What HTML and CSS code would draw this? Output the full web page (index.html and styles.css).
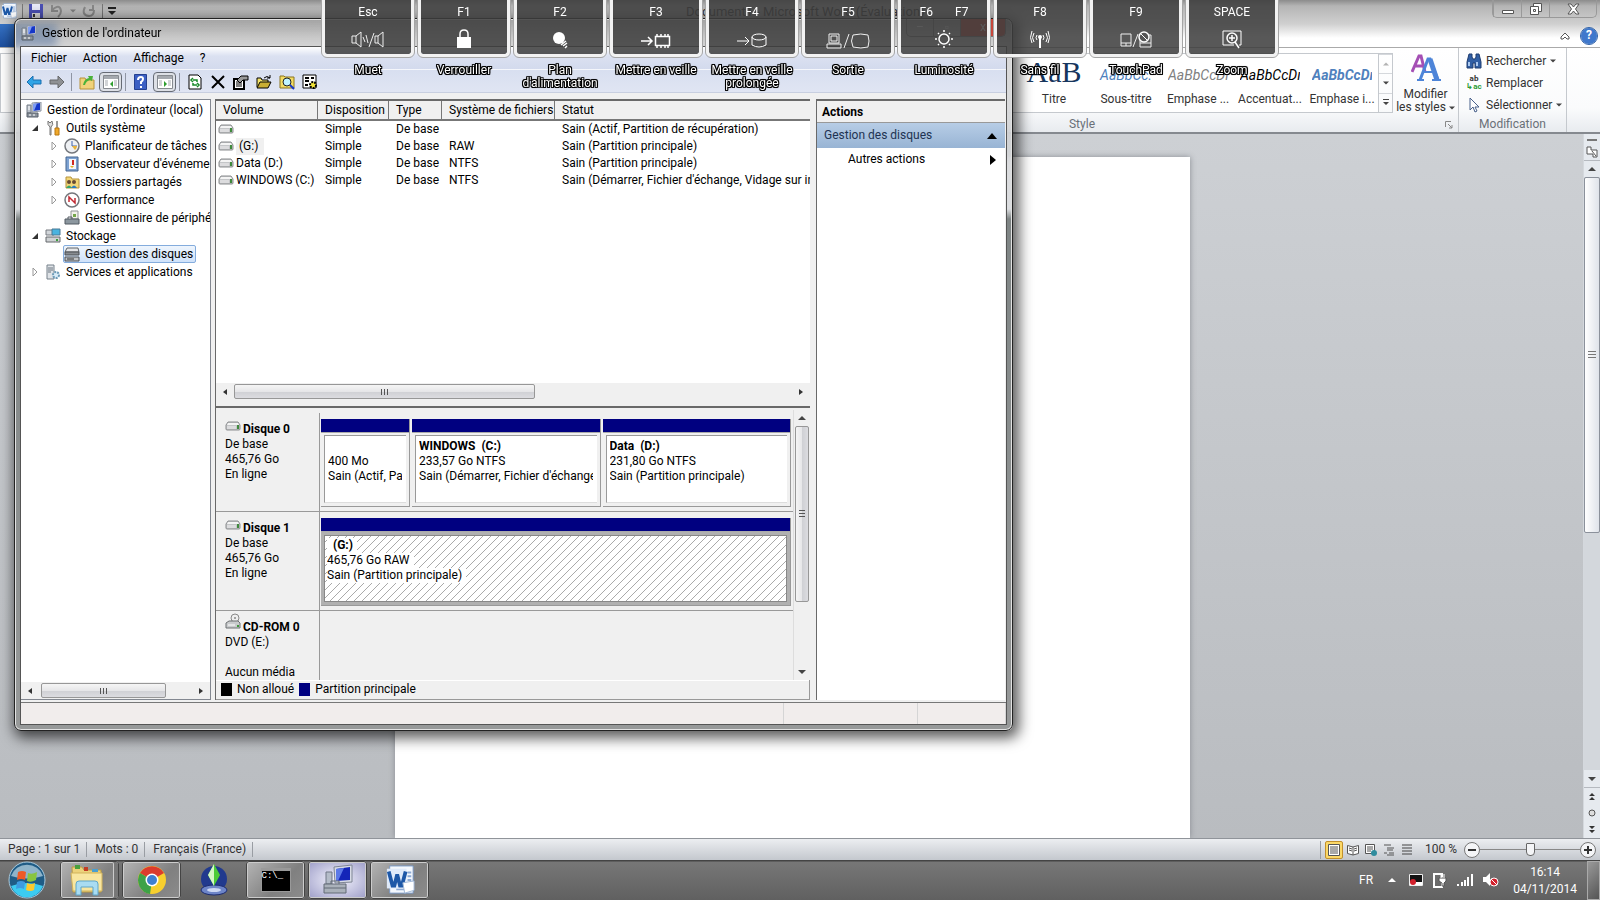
FILE: index.html
```html
<!DOCTYPE html>
<html lang="fr">
  <head>
    <meta charset="utf-8">
    <title>Gestion de l'ordinateur</title>
    <link rel="stylesheet" href="styles.css">
  </head>
  <body>
    <svg class="sprite" width="0" height="0" aria-hidden="true">
      <symbol id="disk" viewBox="0 0 16 10">
        <path d="M3 1h10l2 3v4q0 1-1 1H2Q1 9 1 8V4z" fill="#c4c6c8" stroke="#8b8d8f"/>
        <path d="M3 2h10l1 2H2z" fill="#f4f4f4"/>
        <path d="M2 5h9v3H2z" fill="#dcdcde"/>
        <path d="M12 4h2v4h-2z" fill="#3f8a3c"/>
      </symbol>
      <symbol id="pc" viewBox="0 0 16 16">
        <path d="M6 1l9-1v9l-9 1z" fill="#d9dde4" stroke="#8b93a0"/>
        <path d="M7 2l7-1v7l-7 1z" fill="#1637c8"/>
        <path d="M7 2l4-.6L8 9H7z" fill="#7f9df2"/>
        <path d="M1 3h4v8H1z" fill="#b9c0c9" stroke="#747c86"/>
        <path d="M2 5h2M2 7h2" stroke="#fff"/>
        <path d="M1 11h11v4H1z" fill="#8a929b" stroke="#59616a"/>
        <path d="M3 13h2m2 0h2" stroke="#fff"/>
      </symbol>
      <symbol id="open" viewBox="0 0 8 8"><path d="M7 1v6H1z" fill="#333"/></symbol>
      <symbol id="closed" viewBox="0 0 8 8"><path d="M2 0l4 4-4 4z" fill="#fff" stroke="#999"/></symbol>
      <symbol id="left" viewBox="0 0 8 8"><path d="M6 1v6L2 4z" fill="#333"/></symbol>
      <symbol id="right" viewBox="0 0 8 8"><path d="M2 1v6l4-3z" fill="#333"/></symbol>
      <symbol id="up" viewBox="0 0 8 8"><path d="M0 6h8L4 2z" fill="#444"/></symbol>
      <symbol id="down" viewBox="0 0 8 8"><path d="M0 2h8L4 6z" fill="#444"/></symbol>
      <symbol id="pane" viewBox="0 0 16 14">
        <path d="M.5.5h15v13H.5z" fill="#fff" stroke="#868a90"/>
        <path d="M1 1h14v3H1z" fill="#a5a9af"/>
        <path d="M2 6h3M2 8h3M2 10h3M11 6h3M11 8h3M11 10h3" stroke="#a5a9af"/>
      </symbol>
      <symbol id="word" viewBox="0 0 32 32">
        <path d="M5 1h25v29H5z" fill="#f4f8fd" stroke="#7696c4"/>
        <path d="M24 8h4M24 12h4M24 16h4M12 26h12" stroke="#8ba9d5" stroke-width="2"/>
        <path d="M2 4h21v21H2z" fill="#dfeafa"/>
        <path d="M4 7l4 15h2l3-12 3 12h2l4-15" fill="none" stroke="#1d58a8" stroke-width="4"/>
        <path d="M19 19l12-2v10l-10 3z" fill="#fff" stroke="#9db4d4"/>
      </symbol>
    </svg>

    <main class="desktop">
      <section class="word">
        <header class="word-title">
          <div class="quick">
            <svg width="16" height="16"><use href="#word"/></svg>
            <i class="bar"></i>
            <button aria-label="Enregistrer"><svg width="16" height="16" viewBox="0 0 16 16"><path d="M1 1h14v14H1z" fill="#4b50b4"/><path d="M4 1h8v6H4z" fill="#e8eaf8"/><path d="M4 10h8v5H4z" fill="#ddd"/><path d="M5 11h2v3H5z" fill="#333"/></svg></button>
            <button aria-label="Annuler"><svg width="16" height="16" viewBox="0 0 16 16"><path d="M3 2v6h6M3 7q8-7 9 1 0 3-3 6" fill="none" stroke="#888" stroke-width="2"/></svg></button>
            <svg width="6" height="6"><use href="#down" opacity=".5"/></svg>
            <button aria-label="Rétablir"><svg width="16" height="16" viewBox="0 0 16 16"><path d="M12 2v5H8M4 4q-4 8 4 9 5 0 5-6" fill="none" stroke="#888" stroke-width="2"/></svg></button>
            <i class="bar"></i>
            <svg width="8" height="9" viewBox="0 0 8 9"><path d="M0 0h8v2H0zM0 4h8L4 8z" fill="#222"/></svg>
          </div>
          <span class="word-name">Document1 - Microsoft Word (Évaluation)</span>
          <div class="word-buttons">
            <button aria-label="Réduire"><svg width="12" height="12" viewBox="0 0 12 12"><path d="M.5 7.500h11v3H.5z" fill="#fff" stroke="#555"/></svg></button>
            <button aria-label="Niveau inférieur"><svg width="12" height="12" viewBox="0 0 12 12"><path d="M3.500.5h8v8h-8z" fill="#fff" stroke="#555"/><path d="M.5 3.500h8v8h-8zM3.500 6.500h2v2h-2z" fill="#fff" stroke="#555"/></svg></button>
            <button class="wide" aria-label="Fermer"><svg width="13" height="12" viewBox="0 0 13 12"><path d="M1 1h3l2.500 3L9 1h3L8.500 6l3.500 5H9L6.500 8 4 11H1l3.500-5z" fill="#fff" stroke="#555"/></svg></button>
          </div>
        </header>
        <nav class="tabs">
          <button class="file-tab" aria-label="Fichier"></button>
          <div class="tab-right">
            <button aria-label="Réduire le ruban"><svg width="10" height="8" viewBox="0 0 10 8"><path d="M1 5l4-4 4 4v2H7L5 5 3 7H1z" fill="#fff" stroke="#555"/></svg></button>
            <button class="help" aria-label="Aide">?</button>
          </div>
        </nav>
        <div class="ribbon">
          <div class="group style-group">
            <div class="group-body">
              <div class="gallery">
                <button class="style-item"><span class="sample titre">AaB</span>Titre</button>
                <button class="style-item"><span class="sample sous">AaBbCc.</span>Sous-titre</button>
                <button class="style-item"><span class="sample emph">AaBbCcDı</span>Emphase ...</button>
                <button class="style-item"><span class="sample acc">AaBbCcDı</span>Accentuat...</button>
                <button class="style-item"><span class="sample intense">AaBbCcDı</span>Emphase i...</button>
              </div>
              <div class="gallery-scroll">
                <button aria-label="Haut"><svg width="6" height="6" opacity=".4"><use href="#up"/></svg></button>
                <button aria-label="Bas"><svg width="6" height="6"><use href="#down"/></svg></button>
                <button aria-label="Autres"><svg width="6" height="8" viewBox="0 0 6 8"><path d="M0 0h6v1H0zM0 3h6L3 6z" fill="#444"/></svg></button>
              </div>
              <button class="modify">
                <svg width="30" height="28" viewBox="0 0 30 28"><path d="M1 18L8 2h2l4 16M4 12h9" fill="none" stroke="#a44fb4" stroke-width="3"/><path d="M9 26l8-21 2 0 8 21" fill="none" stroke="#4d84d8" stroke-width="3"/><path d="M19 5l7 21" stroke="#4d84d8" stroke-width="5"/><path d="M12 18h12M6 26h7m8 0h9" stroke="#4d84d8" stroke-width="2"/></svg>
                <span>Modifier</span>
                <span>les styles <svg width="6" height="6"><use href="#down"/></svg></span>
              </button>
            </div>
            <div class="group-name">Style<svg class="launcher" width="8" height="8" viewBox="0 0 8 8"><path d="M.5 6V.5H6M3 3l4 4M7 4v3H4" fill="none" stroke="#888"/></svg></div>
          </div>
          <div class="group edit-group">
            <div class="group-body edit">
              <button><svg width="16" height="16" viewBox="0 0 16 16"><path d="M3 1h3v3l1 2h2l1-2V1h3l2 8v6H9v-5H7v5H1V9z" fill="#315fa4" stroke="#1f3c6f"/><path d="M3 9v4m8-4v4" stroke="#a9c8f0" stroke-width="2"/></svg>Rechercher <svg width="6" height="6"><use href="#down"/></svg></button>
              <button><span class="abac"><b>ab</b><b class="ac">↳ac</b></span>Remplacer</button>
              <button><svg width="16" height="16" viewBox="0 0 16 16"><path d="M4 1v12l3-3 2 5 2-1-2-4h4z" fill="#fff" stroke="#48608a"/></svg>Sélectionner <svg width="6" height="6"><use href="#down"/></svg></button>
            </div>
            <div class="group-name">Modification</div>
          </div>
        </div>
        <div class="doc">
          <div class="doc-view"><article class="page"></article></div>
          <div class="doc-scroll">
            <i class="split"></i>
            <button aria-label="Règle"><svg width="12" height="12" viewBox="0 0 12 12"><path d="M1 1h4v3h6v7H7V8H1z" fill="#fff" stroke="#555"/><path d="M6 5l4 5" stroke="#555"/></svg></button>
            <button class="line-top" aria-label="Défiler vers le haut"><svg width="10" height="8"><use href="#up"/></svg></button>
            <div class="track"><div class="thumb"><i class="grip"></i></div></div>
            <button aria-label="Défiler vers le bas"><svg width="10" height="8"><use href="#down"/></svg></button>
            <button class="line-top" aria-label="Page précédente"><svg width="8" height="8" viewBox="0 0 8 8"><path d="M1 4h6L4 1zM1 8h6L4 5z" fill="#333"/></svg></button>
            <button aria-label="Parcourir"><svg width="8" height="8" viewBox="0 0 8 8"><circle cx="4" cy="4" r="3" fill="#ddd" stroke="#555"/></svg></button>
            <button aria-label="Page suivante"><svg width="8" height="8" viewBox="0 0 8 8"><path d="M1 0h6L4 3zM1 4h6L4 7z" fill="#333"/></svg></button>
          </div>
        </div>
        <footer class="word-status">
          <span class="stat">Page : 1 sur 1</span>
          <span class="stat">Mots : 0</span>
          <span class="stat">Français (France)</span>
          <div class="views">
            <button class="on" aria-label="Page"><svg width="12" height="12" viewBox="0 0 12 12"><path d="M.5.5h11v11H.5z" fill="#fff" stroke="#555"/><path d="M2 3h8M2 5h8M2 7h8M2 9h8" stroke="#555"/></svg></button>
            <button aria-label="Lecture plein écran"><svg width="12" height="12" viewBox="0 0 12 12"><path d="M.5 1.500L6 3l5.500-1.500v8L6 11 .5 9.500zM6 3v8M2 4l3 1M2 6l3 1M7 5l3-1M7 7l3-1" fill="#fff" stroke="#555"/></svg></button>
            <button aria-label="Web"><svg width="12" height="12" viewBox="0 0 12 12"><path d="M.5.5h9v9h-9zM2 3h6M2 5h6M2 7h4" fill="#fff" stroke="#555"/><circle cx="9" cy="9" r="3" fill="#2f8c9e"/></svg></button>
            <button aria-label="Plan"><svg width="12" height="12" viewBox="0 0 12 12"><path d="M1 1h7M4 4h7M4 6h6M1 9h3M6 9h5M4 11h7" stroke="#555"/></svg></button>
            <button aria-label="Brouillon"><svg width="12" height="12" viewBox="0 0 12 12"><path d="M1 1h10M1 4h10M1 7h10M1 10h10" stroke="#444"/></svg></button>
          </div>
          <label class="percent" for="zoom">100 %</label>
          <button class="round" aria-label="Zoom arrière"><svg width="8" height="8" viewBox="0 0 8 8"><path d="M0 4h8" stroke="#333" stroke-width="2"/></svg></button>
          <input class="zoom" id="zoom" type="range" min="0" max="100" value="50">
          <button class="round" aria-label="Zoom avant"><svg width="8" height="8" viewBox="0 0 8 8"><path d="M0 4h8M4 0v8" stroke="#333" stroke-width="2"/></svg></button>
        </footer>
      </section>

      <section class="window">
        <header class="titlebar">
          <svg width="16" height="16"><use href="#pc"/></svg>
          <h1>Gestion de l'ordinateur</h1>
          <div class="win-buttons">
            <button aria-label="Réduire">–</button>
            <button aria-label="Agrandir">▫</button>
            <button class="close" aria-label="Fermer">x</button>
          </div>
        </header>
        <div class="client">
          <nav class="menubar">
            <button>Fichier</button><button>Action</button><button>Affichage</button><button>?</button>
          </nav>
          <div class="toolbar">
            <button aria-label="Précédent"><svg width="16" height="14" viewBox="0 0 16 14"><path d="M1 7l6-6v4h8v4H7v4z" fill="#2fa4e6" stroke="#1a6fb0"/></svg></button>
            <button aria-label="Suivant"><svg width="16" height="14" viewBox="0 0 16 14"><path d="M15 7L9 1v4H1v4h8v4z" fill="#8f9194" stroke="#66686b"/></svg></button>
            <i class="sep"></i>
            <button aria-label="Dossier parent"><svg width="16" height="16" viewBox="0 0 16 16"><path d="M1 4h5l1 2h8v9H1z" fill="#f1d27a" stroke="#b8923a"/><path d="M4 11q1-6 6-7L9 2l5 0-1 5-2-1q-4 1-5 5z" fill="#4bb23a"/></svg></button>
            <button class="pressed" aria-label="Arborescence"><svg width="16" height="14"><use href="#pane"/><path d="M10 6v6L7 9z" fill="#2f9e2f"/></svg></button>
            <i class="sep"></i>
            <button aria-label="Aide"><svg width="13" height="16" viewBox="0 0 13 16"><path d="M.5.5h12v15H.5z" fill="#3b5fc4" stroke="#25408f"/><path d="M4 6q0-3 3-3 2 0 2 2t-2 3v2M7 12v2" fill="none" stroke="#fff" stroke-width="2"/></svg></button>
            <button class="pressed" aria-label="Volet Actions"><svg width="16" height="14"><use href="#pane"/><path d="M7 6v6l3-3z" fill="#2f9e2f"/></svg></button>
            <i class="sep"></i>
            <button aria-label="Actualiser"><svg width="14" height="16" viewBox="0 0 14 16"><path d="M1 1h9l3 3v11H1z" fill="#fff" stroke="#000"/><path d="M5 6h4v2M5 4L3 6l2 2M9 11H5V9M9 9l2 2-2 2" fill="none" stroke="#188a28" stroke-width="1.500"/></svg></button>
            <button aria-label="Supprimer"><svg width="14" height="14" viewBox="0 0 14 14"><path d="M1 1l12 12M13 1L1 13" stroke="#000" stroke-width="2"/></svg></button>
            <button aria-label="Propriétés"><svg width="16" height="16" viewBox="0 0 16 16"><path d="M1 5h10v10H1z" fill="#fff" stroke="#000" stroke-width="2"/><path d="M3 8h6M3 10h6M3 12h6" stroke="#000"/><path d="M4 6l4-4h7v4h-5l-3 3z" fill="#999" stroke="#000"/></svg></button>
            <button aria-label="Ouvrir"><svg width="16" height="14" viewBox="0 0 16 14"><path d="M1 12V3h4l1 2h6v2" fill="#f4e36a" stroke="#000"/><path d="M1 13l3-6h11l-3 6z" fill="#c9ae33" stroke="#000"/><path d="M8 3q3-3 6 0M14 0v3h-3" fill="none" stroke="#000"/></svg></button>
            <button aria-label="Rechercher"><svg width="16" height="16" viewBox="0 0 16 16"><path d="M1 2h4l1 1h9v11H1z" fill="#f4dc62" stroke="#8a7420"/><circle cx="8" cy="8" r="4" fill="#bff4ff" stroke="#222"/><path d="M11 11l4 4" stroke="#1637c8" stroke-width="2"/></svg></button>
            <button aria-label="Paramètres"><svg width="16" height="16" viewBox="0 0 16 16"><path d="M1 1h13v13H1z" fill="#fff" stroke="#000"/><path d="M3 4h4M3 7h4M3 11h3M9 4h3" stroke="#000" stroke-width="2"/><circle cx="11" cy="11" r="3" fill="#f2e437" stroke="#000" stroke-dasharray="2 1" stroke-width="2"/></svg></button>
          </div>

          <div class="panels">
            <aside class="tree-pane">
              <ul class="tree">
                <li class="root"><svg width="16" height="16"><use href="#pc"/></svg><span>Gestion de l'ordinateur (local)</span></li>
                <li class="l1"><svg class="twist" width="8" height="8"><use href="#open"/></svg><svg width="16" height="16" viewBox="0 0 16 16"><path d="M5 15V7Q2 5 3 1l2 2 2-2q2 4-1 6v8z" fill="#ddd" stroke="#777"/><path d="M11 1h2v7h-2z" fill="#999"/><path d="M10 8h4v7h-4z" fill="#f0a92b" stroke="#b87610"/></svg><span>Outils système</span></li>
                <li class="l2"><svg class="twist" width="8" height="8"><use href="#closed"/></svg><svg width="16" height="16" viewBox="0 0 16 16"><circle cx="8" cy="8" r="7" fill="#eef0f3" stroke="#74777c" stroke-width="1.500"/><path d="M8 3v5h5" fill="none" stroke="#3f62ac"/><path d="M8 8h5a5 5 0 0 1-2 4z" fill="#e8b23a"/></svg><span>Planificateur de tâches</span></li>
                <li class="l2"><svg class="twist" width="8" height="8"><use href="#closed"/></svg><svg width="16" height="16" viewBox="0 0 16 16"><path d="M2 1h12v14H2z" fill="#7da2d2" stroke="#44648f"/><path d="M5 3h7v10H5z" fill="#f4f6fa"/><path d="M9 4v5" stroke="#d02a20" stroke-width="2"/><path d="M6 10h4l-2 2z" fill="#e5b021"/></svg><span>Observateur d'événements</span></li>
                <li class="l2"><svg class="twist" width="8" height="8"><use href="#closed"/></svg><svg width="16" height="16" viewBox="0 0 16 16"><path d="M2 3h5l1 2h7v9H2z" fill="#f3d677" stroke="#b6933c"/><circle cx="5" cy="8" r="2" fill="#674a33"/><circle cx="10" cy="8" r="2" fill="#674a33"/><path d="M2 14q3-5 6 0z" fill="#37a66a"/><path d="M7 14q3-5 6 0z" fill="#2c7bc0"/></svg><span>Dossiers partagés</span></li>
                <li class="l2"><svg class="twist" width="8" height="8"><use href="#closed"/></svg><svg width="16" height="16" viewBox="0 0 16 16"><circle cx="8" cy="8" r="7" fill="#fff" stroke="#74777c" stroke-width="1.500"/><path d="M5 10V5l6 6V6" fill="none" stroke="#c22a33" stroke-width="1.500"/></svg><span>Performance</span></li>
                <li class="l2"><svg class="twist" width="8" height="8"></svg><svg width="16" height="16" viewBox="0 0 16 16"><path d="M7 1h7v8H7z" fill="#f2f2ea" stroke="#8f9294"/><path d="M9 4h3v3H9z" fill="#74a74a"/><path d="M1 9h14v5H1z" fill="#8c979f" stroke="#525b63"/><path d="M4 9V7h4v2" fill="none" stroke="#525b63"/></svg><span>Gestionnaire de périphériques</span></li>
                <li class="l1"><svg class="twist" width="8" height="8"><use href="#open"/></svg><svg width="16" height="16" viewBox="0 0 16 16"><path d="M1 2h8v5H1z" fill="#d2d6da" stroke="#767b80"/><path d="M7 1h8v6H7z" fill="#49b3df" stroke="#4a7893"/><path d="M1 9h14v5H1z" fill="#cfd2d4" stroke="#65696c"/><path d="M11 11h2v2h-2z" fill="#3c9d3c"/></svg><span>Stockage</span></li>
                <li class="l2 selected"><svg class="twist" width="8" height="8"></svg><span class="pick"><svg width="16" height="16" viewBox="0 0 16 16"><path d="M3 2h11l1 4H1z" fill="#e5e6e8" stroke="#606468"/><path d="M1 6h14v3H1z" fill="#888c90" stroke="#4d5154"/><path d="M1 11h14v4H1z" fill="#bfc2c4" stroke="#4d5154"/><path d="M3 13h7" stroke="#333"/></svg>Gestion des disques</span></li>
                <li class="l1"><svg class="twist" width="8" height="8"><use href="#closed"/></svg><svg width="16" height="16" viewBox="0 0 16 16"><path d="M2 1h7v14H2z" fill="#dfe3e7" stroke="#77818b"/><path d="M3 4h5M3 6h5M3 8h3" stroke="#6c7781"/><circle cx="11" cy="11" r="3" fill="#d9ecf8" stroke="#6d9bb8" stroke-width="2" stroke-dasharray="2 1"/></svg><span>Services et applications</span></li>
              </ul>
              <div class="hscroll">
                <button aria-label="Gauche"><svg width="8" height="8"><use href="#left"/></svg></button>
                <div class="htrack"><div class="hthumb tree-thumb"><i></i></div></div>
                <button aria-label="Droite"><svg width="8" height="8"><use href="#right"/></svg></button>
              </div>
            </aside>

            <section class="middle">
              <div class="list">
                <table>
                  <colgroup><col class="c1"><col class="c2"><col class="c3"><col class="c4"><col></colgroup>
                  <thead><tr><th>Volume</th><th>Disposition</th><th>Type</th><th>Système de fichiers</th><th>Statut</th></tr></thead>
                  <tbody>
                    <tr><td class="vol"><svg width="16" height="10"><use href="#disk"/></svg></td><td>Simple</td><td>De base</td><td></td><td>Sain (Actif, Partition de récupération)</td></tr>
                    <tr><td class="vol"><svg width="16" height="10"><use href="#disk"/></svg><span class="focus">(G:)</span></td><td>Simple</td><td>De base</td><td>RAW</td><td>Sain (Partition principale)</td></tr>
                    <tr><td class="vol"><svg width="16" height="10"><use href="#disk"/></svg><span>Data (D:)</span></td><td>Simple</td><td>De base</td><td>NTFS</td><td>Sain (Partition principale)</td></tr>
                    <tr><td class="vol"><svg width="16" height="10"><use href="#disk"/></svg><span>WINDOWS (C:)</span></td><td>Simple</td><td>De base</td><td>NTFS</td><td>Sain (Démarrer, Fichier d'échange, Vidage sur incident)</td></tr>
                  </tbody>
                </table>
              </div>
              <div class="hscroll">
                <button aria-label="Gauche"><svg width="8" height="8"><use href="#left"/></svg></button>
                <div class="htrack"><div class="hthumb list-thumb"><i></i></div></div>
                <button aria-label="Droite"><svg width="8" height="8"><use href="#right"/></svg></button>
              </div>
              <div class="splitter"></div>
              <div class="lower">
                <div class="disks">
                  <div class="disk">
                    <div class="disk-info"><strong><svg width="16" height="10"><use href="#disk"/></svg>Disque 0</strong><span>De base</span><span>465,76 Go</span><span>En ligne</span></div>
                    <div class="parts">
                      <div class="part small"><div class="cap"></div><div class="part-body"><strong>&nbsp;</strong><span>400 Mo</span><span>Sain (Actif, Partition</span></div></div>
                      <div class="part"><div class="cap"></div><div class="part-body"><strong>WINDOWS&nbsp; (C:)</strong><span>233,57 Go NTFS</span><span>Sain (Démarrer, Fichier d'échange</span></div></div>
                      <div class="part"><div class="cap"></div><div class="part-body"><strong>Data&nbsp; (D:)</strong><span>231,80 Go NTFS</span><span>Sain (Partition principale)</span></div></div>
                    </div>
                  </div>
                  <div class="disk">
                    <div class="disk-info"><strong><svg width="16" height="10"><use href="#disk"/></svg>Disque 1</strong><span>De base</span><span>465,76 Go</span><span>En ligne</span></div>
                    <div class="parts">
                      <div class="part hatched"><div class="cap"></div><div class="part-body"><strong>&nbsp; (G:)</strong><span>465,76 Go RAW</span><span>Sain (Partition principale)</span></div></div>
                    </div>
                  </div>
                  <div class="disk">
                    <div class="disk-info"><strong><svg width="16" height="16" viewBox="0 0 16 16"><circle cx="10" cy="5" r="4" fill="#eee" stroke="#888"/><circle cx="10" cy="5" r="1" fill="#888"/><path d="M1 10l3-2h9l2 2v5H1z" fill="#c9cbcd" stroke="#6d7072"/><path d="M3 12h7" stroke="#fff"/><path d="M12 12h2v2h-2z" fill="#3f9a3c"/></svg>CD-ROM 0</strong><span>DVD (E:)</span><span>&nbsp;</span><span>Aucun média</span></div>
                    <div class="parts"></div>
                  </div>
                </div>
                <div class="vscroll">
                  <button aria-label="Haut"><svg width="8" height="8"><use href="#up"/></svg></button>
                  <div class="vtrack"><div class="vthumb"><i></i></div></div>
                  <button aria-label="Bas"><svg width="8" height="8"><use href="#down"/></svg></button>
                </div>
              </div>
              <div class="legend"><i class="black"></i><span>Non alloué</span><i class="navy"></i><span>Partition principale</span></div>
            </section>

            <aside class="actions">
              <h2>Actions</h2>
              <button class="act-head">Gestion des disques<svg width="10" height="8"><path d="M0 7h10L5 1z"/></svg></button>
              <button class="act-item">Autres actions<svg width="6" height="10"><path d="M0 0v10l6-5z"/></svg></button>
            </aside>
          </div>
          <footer class="status"><span></span><span></span><span></span></footer>
        </div>
      </section>
    </main>

    <footer class="taskbar">
      <button class="start" aria-label="Démarrer"><svg width="38" height="38" viewBox="0 0 38 38"><circle cx="19" cy="19" r="18" fill="#1f5c86" stroke="#a9c9dc"/><path d="M3 25a17 17 0 0 0 32 0q-16-6-32 0z" fill="#3ccbf0"/><path d="M3 15a17 17 0 0 1 32 0q-16 5-32 0z" fill="#8fb4ca"/><path d="M10 11q4-2 8 0l-1 8q-4-2-8 0z" fill="#ee5a25"/><path d="M20 12q4 2 9-1l-1 8q-5 3-9 1z" fill="#88c540"/><path d="M9 21q4-2 8 0l-1 7q-4-2-8 0z" fill="#3d9be0"/><path d="M19 22q4 2 8 0l-1 7q-4 2-8 0z" fill="#fcc92d"/></svg></button>
      <button class="task stack" aria-label="Explorateur"><svg width="34" height="32" viewBox="0 0 34 32"><path d="M2 3h10l2 3h17v22H3z" fill="#ecd27b" stroke="#b99a45"/><path d="M5 1h5v4H5z" fill="#48a03e"/><path d="M14 3h4v4h-4z" fill="#c23c25"/><path d="M22 5h6v3h-6z" fill="#4a9fd0"/><path d="M1 9h31v18H3z" fill="#f8e6a0" stroke="#d1b35d"/><path d="M6 31V20q0-3 3-3h16q3 0 3 3v11h-5v-8H11v8z" fill="#a9dcf2" stroke="#5ea6c9"/></svg></button>
      <button class="task" aria-label="Chrome"><svg width="30" height="30" viewBox="0 0 30 30"><circle cx="15" cy="15" r="14" fill="#f7cf2e"/><path d="M15 15L3 8a14 14 0 0 1 24 0z" fill="#db3b2d"/><path d="M15 15L3 8a14 14 0 0 0 10 21z" fill="#3ea247"/><circle cx="15" cy="15" r="6.500" fill="#fff"/><circle cx="15" cy="15" r="5" fill="#3f7fd0"/></svg></button>
      <button class="task plain" aria-label="Les Sims"><svg width="28" height="32" viewBox="0 0 28 32"><circle cx="14" cy="15" r="13" fill="#213a8e"/><ellipse cx="14" cy="26" rx="13" ry="5" fill="#6d85c8" stroke="#1c2c72"/><ellipse cx="14" cy="26" rx="7" ry="2" fill="#cdd8f3"/><path d="M14 0l6 11-6 11-6-11z" fill="#4ccc38"/><path d="M14 0v22L8 11z" fill="#d5f7c6"/></svg></button>
      <button class="task" aria-label="Invite de commandes"><span class="cmd">C:\_</span></button>
      <button class="task active" aria-label="Gestion de l'ordinateur"><svg width="32" height="32" viewBox="0 0 32 32"><path d="M12 3l18-2v17l-17 1z" fill="#d8dce6" stroke="#7e8594"/><path d="M14 5l14-2v13l-14 1z" fill="#1425b8"/><path d="M14 5l8-1-6 13h-2z" fill="#5c79e8"/><path d="M4 8h6v12H4z" fill="#b4bcc8" stroke="#6f7785"/><path d="M2 20h22v9H2z" fill="#aab1ba" stroke="#626b76"/><path d="M9 20v-3h8v3M2 24h22" fill="none" stroke="#626b76"/></svg></button>
      <button class="task" aria-label="Word"><svg width="30" height="30"><use href="#word"/></svg></button>
      <div class="tray">
        <span>FR</span>
        <button aria-label="Icônes cachées"><svg width="8" height="8" viewBox="0 0 8 8"><path d="M0 6h8L4 2z" fill="#fff"/></svg></button>
        <svg width="14" height="12" viewBox="0 0 14 12"><path d="M.5.5h13v11H.5z" fill="#111" stroke="#eee"/><path d="M1 8h12v3H1z" fill="#fff"/><circle cx="4" cy="8" r="3" fill="#d2202c"/></svg>
        <svg width="14" height="16" viewBox="0 0 14 16"><path d="M1 2h8v13H1z" fill="none" stroke="#fff" stroke-width="2"/><path d="M6 6h7v3l-2 2v3H9v-3L6 9z" fill="#fff" stroke="#555"/><path d="M8 2v4m3-4v4" stroke="#fff"/></svg>
        <svg width="16" height="12" viewBox="0 0 16 12"><path d="M0 12V10h2v2zM4 12V8h2v4zM7 12V6h2v6zM10 12V3h2v9zM14 12V0h2v12z" fill="#fff"/></svg>
        <svg width="16" height="14" viewBox="0 0 16 14"><path d="M0 4h3l4-4v13L3 9H0z" fill="#fff"/><circle cx="11" cy="9" r="4" fill="#d2202c" stroke="#fff"/><path d="M8 6l6 6" stroke="#fff"/></svg>
        <time><span>16:14</span><span>04/11/2014</span></time>
      </div>
      <button class="peek" aria-label="Afficher le Bureau"></button>
    </footer>

    <div class="keys">
      <div class="key"><button><span>Esc</span><svg width="34" height="18" viewBox="0 0 34 18"><path d="M1 5h4l5-4v15l-5-4H1zM5 5v7M12 6l2 5M15 4l2 8M18 16l5-14M24 5h3l5-4v15l-5-4h-3zM27 5v7" fill="none" stroke="#eee"/></svg></button><p>Muet</p></div>
      <div class="key"><button><span>F1</span><svg width="16" height="20" viewBox="0 0 16 20"><path d="M4 9V5q0-4 4-4t4 4v4" fill="none" stroke="#fff" stroke-width="1.500"/><path d="M1 8h14v11H1z" fill="#fff"/></svg></button><p>Verrouiller</p></div>
      <div class="key"><button><span>F2</span><svg width="18" height="18" viewBox="0 0 18 18"><circle cx="8" cy="7" r="6" fill="#fff"/><path d="M10 14l5-4M12 15l4-3M14 17l2-2" stroke="#fff" stroke-width="1.500"/></svg></button><p>Plan d'alimentation</p></div>
      <div class="key"><button><span>F3</span><svg width="32" height="16" viewBox="0 0 32 16"><path d="M1 8h11M8 4l4 4-4 4M15.500 3.500h14v9h-14zM17 1v2m4-2v2m4-2v2m3-2v2M17 13v2m4-2v2m4-2v2m3-2v2" fill="none" stroke="#fff" stroke-width="1.500"/></svg></button><p>Mettre en veille</p></div>
      <div class="key"><button><span>F4</span><svg width="32" height="16" viewBox="0 0 32 16"><path d="M1 8h12M9 4l4 4-4 4M16 4v8q7 4 14 0V4" fill="none" stroke="#fff"/><ellipse cx="23" cy="4" rx="7" ry="3" fill="none" stroke="#fff"/></svg></button><p>Mettre en veille prolongée</p></div>
      <div class="key"><button><span>F5</span><svg width="44" height="16" viewBox="0 0 44 16"><path d="M3 1h10v9H3zM5 3h6v5H5zM1 11h14v4H1zM18 15l5-14M27 2q8-2 15 0 2 6 0 12-7 2-15 0-3-6 0-12" fill="none" stroke="#eee"/></svg></button><p>Sortie</p></div>
      <div class="key"><button><span class="pair"><span>F6</span><span>F7</span></span><svg width="20" height="20" viewBox="0 0 20 20"><circle cx="10" cy="10" r="5" fill="none" stroke="#fff" stroke-width="1.500"/><path d="M10 1v2m0 14v2M1 10h2m14 0h2M4 4l1 1m10 10l1 1M4 16l1-1M15 5l1-1" stroke="#fff" stroke-width="1.500"/></svg></button><p>Luminosité</p></div>
      <div class="key"><button><span>F8</span><svg width="20" height="20" viewBox="0 0 20 20"><path d="M10 9v10" stroke="#fff" stroke-width="2"/><path d="M7 6q-2 3 0 5M13 6q2 3 0 5M4 4q-3 5 0 9M16 4q3 5 0 9M2 2q-3 7 0 12M18 2q3 7 0 12" fill="none" stroke="#fff"/><circle cx="10" cy="8" r="2" fill="#fff"/></svg></button><p>Sans fil</p></div>
      <div class="key"><button><span>F9</span><svg width="34" height="18" viewBox="0 0 34 18"><path d="M2 3h10v12H2zM2 12h10M7 12v3M14 16l5-13M21 4h11v12H21zM21 12h11" fill="none" stroke="#eee"/><circle cx="25" cy="6" r="5" fill="#555" stroke="#fff" stroke-width="1.500"/><path d="M22 3l7 7" stroke="#fff"/></svg></button><p>TouchPad</p></div>
      <div class="key"><button><span>SPACE</span><svg width="20" height="20" viewBox="0 0 20 20"><path d="M12 16H1V2h18v14h-2" fill="none" stroke="#fff"/><circle cx="10" cy="9" r="5" fill="none" stroke="#fff" stroke-width="1.500"/><path d="M10 6v6M7 9h6M13 13l4 6" stroke="#fff" stroke-width="1.500"/></svg></button><p>Zoom</p></div>
    </div>
  </body>
</html>
```

FILE: styles.css
```css
* {box-sizing: border-box;}
body {margin: 0; height: 100vh; display: flex; flex-direction: column; overflow: hidden; font: 12px/15px Roboto, "Open Sans", sans-serif; color: #000;}
button {font: inherit; color: inherit; background: none; border: 0; padding: 0; margin: 0; display: flex; align-items: center; justify-content: center;}
svg {display: block; flex: none;}
p, h1, h2, ul {margin: 0; padding: 0; font: inherit;}
.sprite {position: absolute;}

.desktop {flex: 1; min-height: 0; display: flex; position: relative; overflow: hidden;}

/* word */
.word {flex: 1; display: flex; flex-direction: column; min-width: 0;}
.word-title {height: 24px; display: flex; justify-content: space-between; align-items: flex-start; background: linear-gradient(#8c8c8c, #b5b5b5 6px, #d0d0d0);}
.quick {display: flex; align-items: center; gap: 5px; height: 22px; width: 560px; padding-left: 1px;}
.bar {width: 1px; height: 14px; background: #777;}
.word-name {flex: 1; color: #333; padding: 4px 0 0 126px; font-size: 13px; white-space: nowrap;}
.word-buttons {display: flex; height: 18px; margin-right: 3px; border: 1px solid #999; border-top: 0; border-radius: 0 0 5px 5px;}
.word-buttons button {width: 28px; border-left: 1px solid #999;}
.word-buttons .wide {width: 47px;}
.tabs {height: 24px; display: flex; justify-content: space-between; background: linear-gradient(#d0d0d0, #fff 14px); border-bottom: 1px solid #aaa;}
.file-tab {width: 57px; background: linear-gradient(#3672c4, #1d4f9e);}
.tab-right {display: flex; align-items: center; gap: 11px; padding-right: 3px;}
.help {width: 16px; height: 16px; border-radius: 8px; background: #3f78cc; color: #fff; font-weight: bold; outline: 1px solid #2c5fa8;}
.ribbon {height: 86px; display: flex; justify-content: flex-end; padding-right: 33px; background: linear-gradient(#fff, #fafbfc 60px, #e8ebef); border-bottom: 2px solid #85898f; color: #333;}
.group {display: flex; flex-direction: column; border-right: 1px solid #c5c9ce;}
.style-group {flex: 1;}
.edit-group {width: 108px;}
.group-body {display: flex; height: 70px; padding-top: 5px; justify-content: flex-end;}
.group-name {display: flex; justify-content: center; color: #6a7078; position: relative;}
.style-group .group-name {padding-left: 706px;}
.launcher {position: absolute; right: 5px; top: 4px;}
.gallery {display: flex; height: 60px; border: 1px solid #c5c9ce; background: #fff; flex: 1; justify-content: flex-end;}
.style-item {flex-direction: column; justify-content: flex-start; width: 72px; height: 58px;}
.sample {height: 36px; width: 60px; overflow: hidden; line-height: 43px; margin-bottom: 2px; font-size: 14px; font-style: italic; white-space: nowrap;}
.titre {font: 30px/36px "Liberation Serif", serif; color: #17365d;}
.sous {color: #4f81bd;}
.emph {color: #808080;}
.acc {color: #000;}
.intense {color: #4f81bd; font-weight: bold;}
.gallery-scroll {width: 14px; height: 60px; display: flex; flex-direction: column; border: 1px solid #c5c9ce; border-left: 0;}
.gallery-scroll button {flex: 1; border-top: 1px solid #d5d8dc;}
.modify {flex-direction: column; justify-content: flex-start; width: 65px; line-height: 13px; padding-top: 1px;}
.modify span {display: flex; align-items: center; gap: 3px; white-space: nowrap;}
.modify > svg {margin-bottom: 6px;}
.edit {flex-direction: column; justify-content: flex-start; padding: 2px 0 0 7px;}
.edit button {height: 22px; gap: 4px; justify-content: flex-start; white-space: nowrap;}
.abac {width: 16px; display: flex; flex-direction: column; font-size: 8px; line-height: 8px;}
.ac {color: #2b9c35;}

.doc {flex: 1; min-height: 0; display: flex;}
.doc-view {flex: 1; display: flex; padding-left: 2px; background: linear-gradient(#cdd0d4, #b9bcc0);}
.page {width: 795px; margin: 23px auto 0; background: #fff; box-shadow: 0 0 6px #888c92;}
.doc-scroll {width: 17px; display: flex; flex-direction: column; background: #e6eaef; border-left: 1px solid #d4d8dd;}
.doc-scroll button {height: 17px;}
.doc-scroll .line-top {border-top: 1px solid #b5b9bf;}
.split {height: 2px; margin: 5px 3px 2px; background: #777;}
.track {flex: 1; background: #d3d7dc;}
.thumb {height: 60%; display: flex; align-items: center; justify-content: center; background: linear-gradient(90deg, #fff, #dfe3ea); border: 1px solid #8b919b; border-radius: 2px;}
.grip {width: 8px; height: 7px; background: repeating-linear-gradient(#777 0 1px, transparent 1px 3px);}
.word-status {height: 22px; display: flex; align-items: center; background: linear-gradient(#eceef1, #c4c8ce); border-top: 1px solid #90949a; color: #333;}
.stat {padding: 0 6px 0 8px; border-right: 1px solid #999da3; white-space: nowrap;}
.views {margin-left: auto; display: flex; border-left: 1px solid #999da3; padding-left: 4px;}
.views button {width: 18px; height: 18px;}
.views .on {background: #fbd868; border: 1px solid #c2902c; border-radius: 2px; margin-right: 1px;}
.percent {padding: 0 7px 0 9px; white-space: nowrap;}
.round {width: 16px; height: 16px; border: 1px solid #777; border-radius: 8px; background: #f4f5f7;}
.round:last-child {margin-right: 4px;}
.zoom {appearance: none; width: 100px; height: 16px; margin: 0; background: linear-gradient(#888, #888) center / 100% 1px no-repeat;}
.zoom::-webkit-slider-thumb {appearance: none; width: 9px; height: 13px; background: #f4f5f7; border: 1px solid #666; border-radius: 1px 1px 4px 4px;}

/* management console */
.window {position: absolute; left: 14px; top: 18px; width: 999px; height: 713px; display: flex; flex-direction: column; padding: 0 6px 6px; border: 1px solid #222; border-radius: 7px; background: linear-gradient(rgba(150, 150, 150, .75), rgba(200, 200, 200, .7) 29px, rgba(215, 217, 220, .9) 190px, #7e8484 200px, #979999); backdrop-filter: blur(4px); box-shadow: inset 0 0 0 1px #e2e2e2, 3px 4px 14px 3px rgba(0, 0, 0, .65);}
.titlebar {height: 28px; display: flex; align-items: center; gap: 5px;}
.titlebar svg {margin-top: -1px;}
.titlebar h1 {flex: 1; font-size: 12px;}
.win-buttons {display: flex; align-self: flex-start; color: #fff; border: 1px solid #777; border-top: 0; border-radius: 0 0 5px 5px; overflow: hidden;}
.win-buttons button {width: 27px; height: 17px; border-right: 1px solid #777;}
.win-buttons .close {width: 44px; border: 0; background: #c9473a;}
.client {flex: 1; min-height: 0; display: flex; flex-direction: column; background: #f0f0f0; outline: 1px solid #555;}
.menubar {height: 22px; display: flex; gap: 16px; padding: 1px 10px 0; background: linear-gradient(#fff, #dbe1f1 9px, #d3daed);}
.toolbar {height: 24px; display: flex; align-items: center; padding: 2px 0 0 1px; background: linear-gradient(#d8dff0, #e0e5f3); border-top: 1px solid #f4f6fb; border-bottom: 1px solid #c8cfe0;}
.toolbar button {width: 23px; height: 21px;}
.toolbar .pressed {height: 20px; border: 1px solid #666b75; border-radius: 4px; background: #dde0e6; margin-left: 1px;}
.sep {width: 1px; height: 18px; margin: 0 3px; background: #8f95a3;}
.panels {flex: 1; min-height: 0; display: flex; padding: 6px 1px 2px 0;}
.tree-pane {width: 190px; display: flex; flex-direction: column; margin-right: 4px; background: #fff; border: 1px solid #828790; border-left-width: 0;}
.tree {flex: 1; padding-top: 1px; list-style: none; overflow: hidden; white-space: nowrap;}
.tree li {height: 18px; display: flex; align-items: center; gap: 5px;}
.tree .twist {margin-right: 1px;}
.root {padding-left: 5px;}
.l1 {padding-left: 10px;}
.l2 {padding-left: 29px;}
.pick {height: 18px; display: flex; align-items: center; gap: 5px; margin-left: -1px; padding-right: 2px; border: 1px solid #84acdd; border-radius: 2px; background: linear-gradient(#eef5fd, #cfe2fa);}
.hscroll {height: 17px; display: flex; background: #f0f0f0;}
.hscroll button {width: 18px; flex: none;}
.htrack {flex: 1; padding: 1px 0;}
.hthumb {height: 15px; display: flex; align-items: center; justify-content: center; border: 1px solid #979797; border-radius: 2px; background: linear-gradient(#f5f5f5, #e6e6e8 50%, #cfd0d4 51%, #dcdce0);}
.hthumb i {width: 8px; height: 6px; background: repeating-linear-gradient(90deg, #555 0 1px, transparent 1px 3px);}
.tree-thumb {width: 82%; margin-left: 2px;}
.list-thumb {width: 54%;}

.middle {flex: 1; min-width: 0; display: flex; flex-direction: column; border-top: 2px solid #696969; border-left: 1px solid #696969; margin-right: 6px;}
.list {height: 282px; overflow: hidden; background: #fff;}
table {width: 100%; table-layout: fixed; border-collapse: separate; border-spacing: 0;}
.c1 {width: 102px;}
.c2 {width: 71px;}
.c3 {width: 53px;}
.c4 {width: 113px;}
th, td {padding: 0 0 0 7px; text-align: left; font-weight: normal; white-space: nowrap; overflow: hidden;}
th {height: 20px; padding-top: 1px; background: #f0f0f0; border-right: 1px solid #777; border-bottom: 2px solid #777;}
th:last-child {border-right: 0;}
td {height: 17px; line-height: 17px;}
td.vol {padding-left: 2px;}
.vol svg {display: inline-block; vertical-align: -1px; margin-right: 2px;}
.focus {background: #f0f0f0; display: inline-block; padding: 0 6px 0 3px;}
.splitter {height: 8px; border-bottom: 2px solid #696969; background: #f0f0f0;}
.lower {flex: 1; min-height: 0; display: flex; padding-top: 5px;}
.disks {flex: 1; min-width: 0; overflow: hidden;}
.disk {height: 99px; display: flex; border-bottom: 1px solid #999;}
.disk-info {width: 104px; padding: 9px 0 0 9px; display: flex; flex-direction: column; border-right: 1px solid #999; white-space: nowrap;}
.disk-info strong {display: flex; height: 15px; gap: 2px;}
.disk-info strong svg:first-child {margin-bottom: 6px; align-self: flex-end;}
.parts {flex: 1; min-width: 0; display: flex; gap: 2px; padding: 6px 2px 4px 1px;}
.part {flex: 1; min-width: 0; display: flex; flex-direction: column; border-right: 1px solid #999; border-bottom: 1px solid #999;}
.part.small {flex: none; width: 89px;}
.cap {height: 14px; background: #000080; border-bottom: 1px solid #aaa;}
.part-body {flex: 1; margin: 2px 3px 3px; padding: 3px 4px 0 3px; display: flex; flex-direction: column; background: #fff; border: 1px solid #999; border-right: 0; border-bottom-color: #ddd; white-space: nowrap; overflow: hidden;}
.part-body span, .part-body strong {overflow: hidden; flex: none;}
.hatched .part-body {margin: 0; border: 3px solid #b0b0b0; outline: 1px solid #888; outline-offset: -4px; align-items: flex-start; background: linear-gradient(135deg, transparent 46%, #aaa 46%, #aaa 54%, transparent 54%) 0 0 / 8px 8px #fff;}
.hatched .part-body span, .hatched .part-body strong {background: #fff; padding-right: 4px;}
.vscroll {width: 17px; display: flex; flex-direction: column; margin-top: -3px; border-left: 1px solid #ddd;}
.vscroll button {height: 16px;}
.vtrack {flex: 1;}
.vthumb {height: 74%; margin: 0 1px; display: flex; align-items: center; justify-content: center; border: 1px solid #979797; border-radius: 2px; background: linear-gradient(90deg, #f5f5f5, #e6e6e8 50%, #cfd0d4 51%, #dcdce0);}
.vthumb i {width: 6px; height: 8px; background: repeating-linear-gradient(#555 0 1px, transparent 1px 3px);}
.legend {height: 20px; display: flex; align-items: center; gap: 5px; padding-left: 5px; border: solid #999; border-width: 0 1px 1px 0; box-shadow: inset 0 1px #fff;}
.legend i {width: 11px; height: 13px;}
.black {background: #000;}
.navy {background: #000080;}

.actions {width: 189px; background: #fff; border-top: 2px solid #696969; border-left: 1px solid #696969;}
.actions h2 {height: 22px; padding: 4px 5px 0; font-weight: bold; background: #f0f0f0; border-bottom: 1px solid #999;}
.actions button {width: 100%; justify-content: space-between; height: 24px; padding: 0 8px 0 7px;}
.actions .act-head {height: 25px; background: linear-gradient(#b7cde6, #98b4d4); color: #1e3352;}
.actions .act-head svg {fill: #000;}
.actions .act-item {height: 23px; padding: 0 9px 0 31px;}
.status {height: 22px; display: flex; background: #f1edec; border-top: 1px solid #777;}
.status span {width: 134px; border-right: 1px solid #d5d5d5;}
.status span:first-child {flex: 1;}
.status span:last-child {width: 88px;}

/* taskbar */
.taskbar {height: 40px; display: flex; align-items: center; gap: 3px; padding-left: 8px; background: linear-gradient(#444 1px, #777 2px, #606060); color: #fff;}
.start {width: 38px; height: 38px; margin-right: 11px;}
.task {width: 59px; height: 38px; border: 1px solid #c4c4c4; border-radius: 3px; background: linear-gradient(135deg, #b5b5b5, #808080 60%, #8c8c8c); outline: 1px solid #444; outline-offset: -1px; box-shadow: inset 0 0 0 1px #ccc;}
.stack {box-shadow: inset -4px 0 0 #777, inset -5px 0 0 #ccc, inset 0 0 0 1px #ccc; padding-right: 5px;}
.plain {background: none; border-color: transparent; outline: 0; box-shadow: none;}
.active {background: radial-gradient(#f6f6ff, #9e9ec8);}
.cmd {width: 30px; height: 24px; background: #000; border: 1px solid #999; border-top-width: 3px; color: #fff; font: 9px/10px "Liberation Mono", monospace; text-align: left;}
.tray {margin-left: auto; display: flex; align-items: center; gap: 10px;}
.tray > span {margin-right: 5px;}
.tray button {margin-right: 3px;}
time {display: flex; flex-direction: column; align-items: center; line-height: 17px; margin: 2px 7px 0 4px;}
.peek {width: 13px; height: 39px; background: linear-gradient(135deg, #999, #555); border: 1px solid #aaa;}

/* hotkey overlay */
.keys {position: absolute; left: 320px; top: 0; display: flex;}
.key {width: 96px; display: flex; flex-direction: column; align-items: center; color: #fff;}
.key button {width: 92px; height: 57px; flex-direction: column; justify-content: flex-start; padding-top: 5px; background: rgba(60, 60, 60, .86); background-clip: padding-box; border: solid #f2f2f2; border-width: 0 3px 3px; border-radius: 0 0 5px 5px; outline: 1px solid #a5a5a5;}
.key svg {margin: auto auto 5px;}
.pair {display: flex; gap: 22px;}
.key p {width: 92px; margin-top: 7px; line-height: 13px; text-align: center; text-shadow: 1px 0 #000, -1px 0 #000, 0 1px #000, 0 -1px #000, 1px 1px #000, -1px -1px #000, 1px -1px #000, -1px 1px #000, 0 0 2px #000;}
```
